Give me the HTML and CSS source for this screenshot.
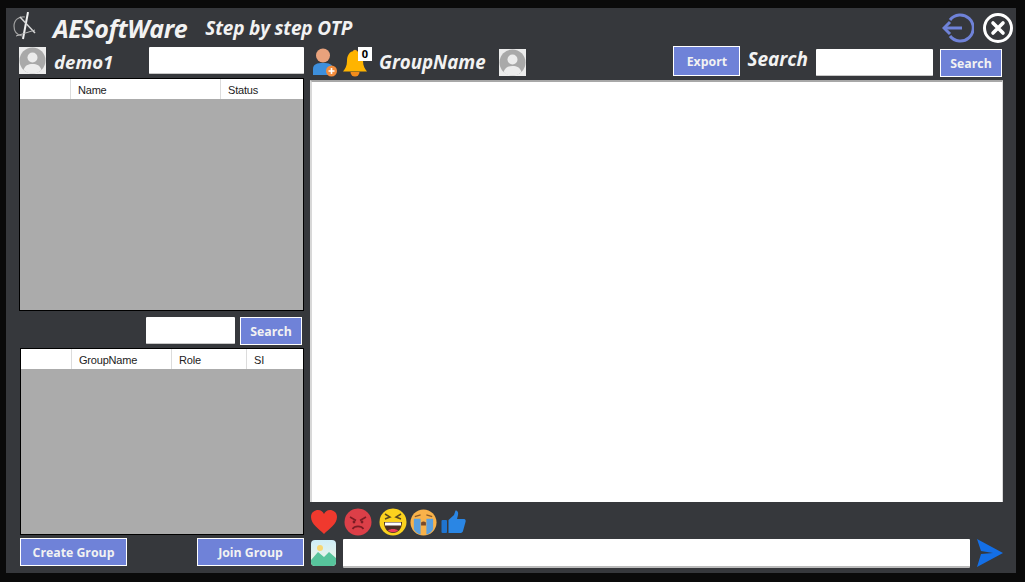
FILE: index.html
```html
<!DOCTYPE html>
<html lang="en">
<head>
<meta charset="utf-8">
<title>AESoftWare</title>
<link rel="stylesheet" href="styles.css">
</head>
<body>
<div class="window">
  <header class="titlebar">
    <svg class="logo" viewBox="0 0 23 28" fill="none">
      <path d="M12 5 C6 4 1 8 1 14 C1 19 4 23 9 24" stroke-width="1.2" stroke="#a0a0a0"/>
      <path d="M15 0 L10 27" stroke-width="2" stroke="#f0f0f0"/>
      <path d="M7 5 L22 21" stroke-width="1.5" stroke="#d8d8d8"/>
      <path d="M3 24 L22 18" stroke-width="1" stroke="#bdbdbd"/>
    </svg>
    <span class="brand">AESoftWare</span>
    <span class="subtitle">Step by step OTP</span>
    <span class="grow"></span>
    <svg class="logout" viewBox="0 0 32 30" fill="none" stroke="#6f82d8" stroke-width="3">
      <path d="M8 7 A13 13 0 1 1 8 23"/>
      <path d="M2 15 H20"/>
      <path d="M8 9 L2 15 L8 21"/>
    </svg>
    <svg class="close" viewBox="0 0 32 32" fill="none" stroke="#fff">
      <circle cx="16" cy="16" r="13.5" stroke-width="3"/>
      <path d="M11 11 L21 21 M21 11 L11 21" stroke-width="3.6" stroke-linecap="round"/>
    </svg>
  </header>
  <div class="columns">
    <aside class="left">
      <div class="user-row">
        <svg class="avatar" viewBox="0 0 27 27"><use href="#avatar-shape"/></svg>
        <span class="username">demo1</span>
        <span class="grow"></span>
        <div class="field user-field"></div>
      </div>
      <div class="grid-view users">
        <div class="grid-head">
          <span class="cell cell-blank"></span>
          <span class="cell cell-name">Name</span>
          <span class="cell">Status</span>
        </div>
      </div>
      <div class="search-row">
        <div class="field group-field"></div>
        <button class="btn btn-search">Search</button>
      </div>
      <div class="grid-view groups">
        <div class="grid-head">
          <span class="cell cell-blank"></span>
          <span class="cell cell-group">GroupName</span>
          <span class="cell cell-role">Role</span>
          <span class="cell">SI</span>
        </div>
      </div>
      <div class="action-row">
        <button class="btn btn-create">Create Group</button>
        <button class="btn btn-join">Join Group</button>
      </div>
    </aside>
    <main class="right">
      <div class="chat-head">
        <svg class="add-user" viewBox="0 0 26 29">
          <circle cx="11" cy="7.5" r="7" fill="#e8a27c"/>
          <path d="M1 27 V21 C1 16 5 15 11 15 C17 15 21 16 21 21 V27 Z" fill="#3d8fdc"/>
          <circle cx="19.5" cy="23" r="5.5" fill="#f28c3c"/>
          <path d="M19.5 20 V26 M16.5 23 H22.5" stroke="#fff" stroke-width="1.6"/>
        </svg>
        <div class="bell-wrap">
          <svg class="bell" viewBox="0 0 26 28">
            <circle cx="13" cy="3" r="2.2" fill="#f5a623"/>
            <path d="M13 2 C7 2 5 7 5 12 C5 17 3 20 1 22.5 H25 C23 20 21 17 21 12 C21 7 19 2 13 2 Z" fill="#ffb400"/>
            <path d="M8.5 23 A4.5 4.5 0 0 0 17.5 23 Z" fill="#f28c1c"/>
          </svg>
          <span class="badge">0</span>
        </div>
        <span class="group-name">GroupName</span>
        <svg class="avatar group-avatar" viewBox="0 0 27 27"><use href="#avatar-shape"/></svg>
        <span class="grow"></span>
        <button class="btn btn-export">Export</button>
        <span class="search-label">Search</span>
        <div class="field chat-field"></div>
        <button class="btn btn-search btn-chat-search">Search</button>
      </div>
      <div class="chat-box"></div>
      <div class="reactions">
        <svg class="emoji heart" viewBox="0 0 28 26"><path d="M14 25 C9 20 1 15 1 8 C1 3 5 1 8 1 C11 1 13 3 14 5 C15 3 17 1 20 1 C23 1 27 3 27 8 C27 15 19 20 14 25 Z" fill="#f0392e"/></svg>
        <svg class="emoji angry" viewBox="0 0 28 28">
          <circle cx="14" cy="14" r="13.5" fill="#dc3f48"/>
          <path d="M6 9 L12 12.5 M22 9 L16 12.5" stroke="#7d1c24" stroke-width="1.6"/>
          <circle cx="10" cy="14" r="1.4" fill="#7d1c24"/><circle cx="18" cy="14" r="1.4" fill="#7d1c24"/>
          <path d="M8.5 21 C10.5 17.5 17.5 17.5 19.5 21" fill="none" stroke="#7d1c24" stroke-width="1.6"/>
        </svg>
        <svg class="emoji laugh" viewBox="0 0 28 28">
          <circle cx="14" cy="14" r="13.5" fill="#fbd21e"/>
          <path d="M6 6 L11 9 L6 11 M22 6 L17 9 L22 11" fill="none" stroke="#5a4a20" stroke-width="1.5"/>
          <path d="M5 14 H23 C23 21 19 25 14 25 C9 25 5 21 5 14 Z" fill="#4a3024"/>
          <path d="M6 14.5 H22 V17.5 H6 Z" fill="#fff"/>
          <path d="M9 22.5 C11 20.5 17 20.5 19 22.5 C17 24.8 11 24.8 9 22.5 Z" fill="#ef3d5a"/>
        </svg>
        <svg class="emoji cry" viewBox="0 0 28 28">
          <circle cx="14" cy="14" r="13.5" fill="#f9b24a"/>
          <path d="M4 10 H11 V26.5 Q6 25 4 21 Z M17 10 H24 V21 Q22 25 17 26.5 Z" fill="#5aa0e0"/>
          <path d="M5 8 L11 6 M23 8 L17 6" stroke="#8a5a28" stroke-width="1.3"/>
          <path d="M11.5 14 Q14 12 16.5 14 V17 H11.5 Z" fill="#7a4a28"/>
        </svg>
        <svg class="emoji like" viewBox="0 0 25 24">
          <rect x="0.5" y="10" width="5.5" height="13" rx="1" fill="#1f74d0"/>
          <path d="M7.5 10 L13 5 L14.5 0.5 C17 0.5 17.5 3 17 5 L16 9 H23 C24.5 9 25 10.5 24.5 12 L22 21 C21.5 22.5 20.5 23 19 23 H7.5 Z" fill="#2a86e4"/>
        </svg>
      </div>
      <div class="composer">
        <svg class="picture" viewBox="0 0 25 26">
          <defs><linearGradient id="sky" x1="0" y1="0" x2="0" y2="1"><stop offset="0" stop-color="#cfeef7"/><stop offset="1" stop-color="#f3f6e4"/></linearGradient></defs>
          <rect x="0" y="0" width="25" height="26" rx="4" fill="url(#sky)"/>
          <circle cx="9" cy="8" r="3" fill="#f7d774"/>
          <path d="M0 20 L7 12 L13 17 L18 12 L25 18 V22 Q25 26 21 26 H4 Q0 26 0 22 Z" fill="#57c49c"/>
        </svg>
        <div class="field message"></div>
        <svg class="send" viewBox="0 0 27 28"><path d="M1 0 L27 14 L1 28 L5 15 L17 14 L5 12 Z" fill="#146fe6"/></svg>
      </div>
    </main>
  </div>
</div>
<svg class="defs" aria-hidden="true">
  <symbol id="avatar-shape" viewBox="0 0 27 27">
    <rect width="27" height="27" fill="#ececec"/>
    <circle cx="13.5" cy="13.5" r="13" fill="#a9a9a9"/>
    <circle cx="13.5" cy="10.5" r="5" fill="#ececec"/>
    <path d="M4.5 23 C6 18.5 9 17 13.5 17 C18 17 21 18.5 22.5 23 C20 25.5 17 26.5 13.5 26.5 C10 26.5 7 25.5 4.5 23 Z" fill="#ececec"/>
  </symbol>
</svg>
</body>
</html>
```
FILE: styles.css
```css
* { box-sizing: border-box; }
html, body { margin: 0; height: 100%; overflow: hidden; }
body { background: #0a0a0a; font-family: "Open Sans", "Liberation Sans", sans-serif; }
.defs { display: none; }
.grow { flex: 1; }

.window {
  width: 1010px;
  height: 565px;
  margin: 8px 0 0 6px;
  background: #36383c;
  padding: 0 13px 7px;
  color: #fff;
}

.titlebar { display: flex; align-items: center; height: 39px; }
.logo { width: 23px; height: 28px; margin: -3px 0 0 -6px; flex: none; }
.brand { font-size: 25px; font-weight: 700; font-style: italic; margin-left: 17px; letter-spacing: -0.4px; color: #f2f2f2; }
.subtitle { font-size: 19px; font-weight: 700; font-style: italic; margin-left: 18px; letter-spacing: -0.2px; color: #f2f2f2; }
.logout { width: 32px; height: 30px; margin-right: 8px; }
.close { width: 32px; height: 32px; margin-right: -11px; }

.columns { display: grid; grid-template-columns: 285px 693px; column-gap: 6px; }
.left, .right { display: flex; flex-direction: column; }

.field { background: #fff; border-bottom: 1px solid #c8c8c8; border-radius: 1px; }

.user-row { display: flex; align-items: center; height: 27px; }
.avatar { width: 27px; height: 27px; display: block; flex: none; }
.username { font-size: 18.6px; font-weight: 700; font-style: italic; margin: 2px 0 0 8px; color: #f2f2f2; }
.user-field { width: 155px; height: 27px; }

.grid-view { background: #ababab; border: 1px solid #000; }
.users { height: 233px; margin-top: 4px; }
.groups { height: 187px; margin-top: 3px; margin-left: 1px; }
.grid-head { display: flex; height: 20px; background: #fff; font: 11px "Liberation Sans", sans-serif; color: #222; }
.cell { display: flex; align-items: center; padding: 1px 0 0 7px; border-right: 1px solid #dcdcdc; letter-spacing: -0.2px; }
.cell:last-child { border-right: 0; flex: 1; }
.cell-blank { width: 51px; padding: 0; }
.cell-name { width: 150px; }
.cell-group { width: 100px; }
.cell-role { width: 75px; }

.btn {
  background: #6f82d8;
  border: 1px solid #fff;
  color: #f2f2f2;
  font: 700 12.3px "Open Sans", sans-serif;
  padding: 0;
  flex: none;
}
.btn-search { width: 62px; height: 28px; }

.search-row { display: flex; justify-content: flex-end; align-items: flex-start; gap: 5px; height: 28px; margin-top: 6px; padding-right: 2px; }
.group-field { width: 89px; height: 27px; }

.action-row { display: flex; justify-content: space-between; height: 28px; margin-top: 3px; padding-left: 1px; }
.btn-create { width: 107px; height: 28px; }
.btn-join { width: 107px; height: 28px; }

.chat-head { display: flex; align-items: flex-start; height: 34px; margin-top: -1px; padding-right: 1px; }
.add-user { width: 26px; height: 29px; margin: 2px 0 0 2px; flex: none; }
.bell-wrap { position: relative; width: 26px; height: 28px; margin: 3px 0 0 4px; flex: none; }
.bell { width: 26px; height: 28px; display: block; }
.badge {
  position: absolute;
  top: -2px;
  left: 16px;
  width: 14px;
  height: 14px;
  background: #fff;
  color: #000;
  font: 700 11px/14px "Open Sans", sans-serif;
  text-align: center;
}
.group-name { font-size: 18.7px; font-weight: 700; font-style: italic; margin: 3px 0 0 11px; color: #f2f2f2; }
.group-avatar { margin: 3px 0 0 13px; }
.btn-export { width: 67px; height: 30px; }
.search-label { font-size: 19px; font-weight: 700; font-style: italic; margin: 0 0 0 7px; color: #f2f2f2; }
.chat-field { width: 117px; height: 27px; margin: 3px 0 0 8px; }
.btn-chat-search { margin: 3px 0 0 7px; }

.chat-box { height: 422px; background: #fff; border-top: 2px solid #a8a8a8; border-left: 2px solid #d8d8d8; border-right: 1px solid #d8d8d8; }

.reactions { display: flex; align-items: center; height: 28px; margin-top: 6px; }
.emoji { display: block; flex: none; }
.heart { width: 28px; height: 26px; }
.angry { width: 28px; height: 28px; margin-left: 6px; }
.laugh { width: 28px; height: 28px; margin-left: 7px; }
.cry { width: 27px; height: 27px; margin-left: 3px; }
.like { width: 25px; height: 24px; margin-left: 4px; }

.composer { display: flex; align-items: center; height: 30px; margin-top: 2px; }
.picture { width: 25px; height: 26px; margin-left: 1px; flex: none; }
.message { width: 627px; height: 29px; margin-left: 7px; border-bottom: 2px solid #bbb; }
.send { width: 27px; height: 28px; margin-left: 6px; flex: none; }
```
